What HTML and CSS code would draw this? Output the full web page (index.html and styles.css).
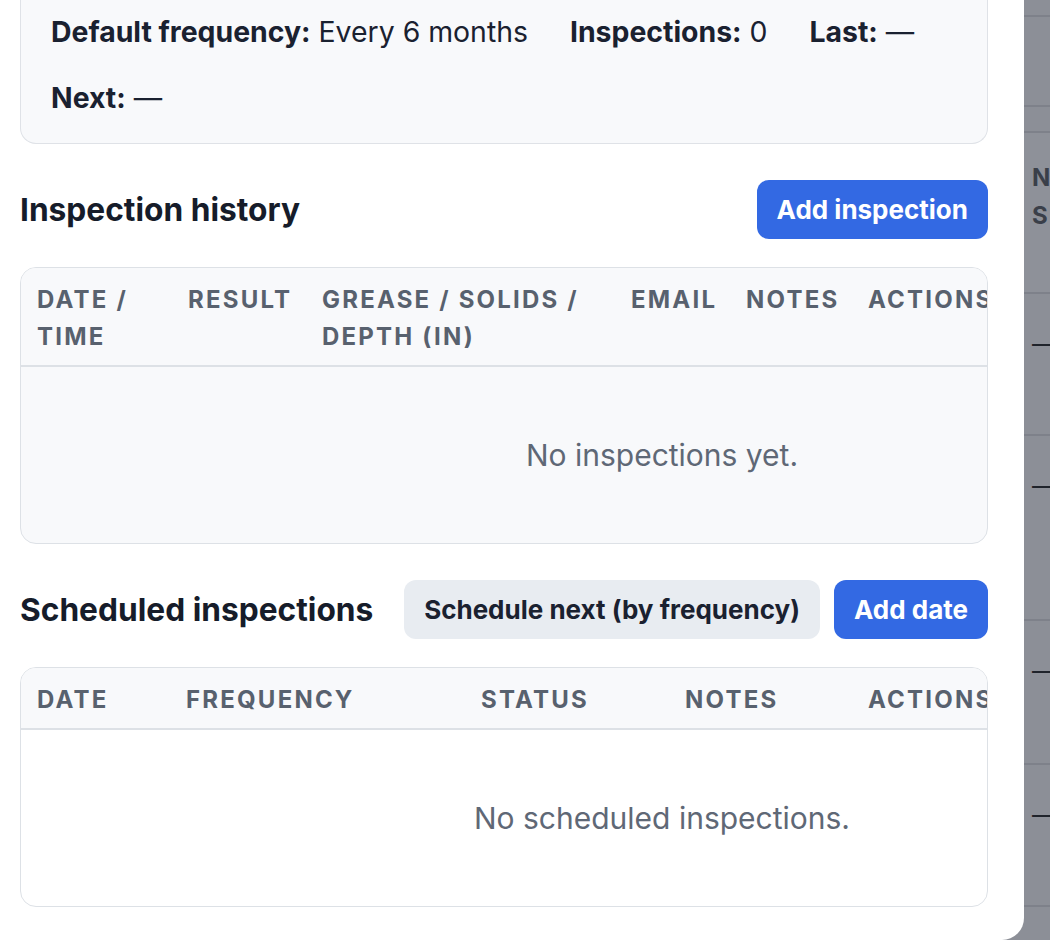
FILE: index.html
```html
<!DOCTYPE html>
<html lang="en">
<head>
<meta charset="utf-8">
<title>Interceptor inspections</title>
<link rel="stylesheet" href="styles.css">
</head>
<body>
<div class="page">
  <div class="page-table">
    <div class="prow r1"><span></span><span></span></div>
    <div class="prow r2"><span></span><span></span></div>
    <div class="prow r3"><span></span><span></span></div>
    <div class="prow phead"><span></span><span class="ph">Next<br>Scheduled</span></div>
    <div class="prow r5"><span></span><span class="dash">—</span></div>
    <div class="prow r6"><span></span><span class="dash">—</span></div>
    <div class="prow r7"><span></span><span class="dash">—</span></div>
    <div class="prow r8"><span></span><span class="dash">—</span></div>
    <div class="prow r9"><span></span><span></span></div>
  </div>
</div>

<aside class="drawer">
  <div class="drawer-body">
    <section class="summary">
      <div class="stat"><b>Default frequency:</b> Every 6 months</div>
      <div class="stat"><b>Inspections:</b> 0</div>
      <div class="stat"><b>Last:</b> —</div>
      <div class="stat"><b>Next:</b> —</div>
    </section>

    <section class="block">
      <div class="block-head">
        <h2>Inspection history</h2>
        <div class="actions">
          <button class="btn btn-primary" type="button">Add inspection</button>
        </div>
      </div>
      <div class="table-wrap tinted">
        <table class="grid">
          <colgroup>
            <col class="c151"><col class="c134"><col class="c309"><col class="c115"><col class="c122"><col>
          </colgroup>
          <thead>
            <tr>
              <th>Date / Time</th>
              <th>Result</th>
              <th>Grease / Solids / Depth (in)</th>
              <th>Email</th>
              <th>Notes</th>
              <th>Actions</th>
            </tr>
          </thead>
          <tbody>
            <tr><td colspan="6" class="empty">No inspections yet.</td></tr>
          </tbody>
        </table>
      </div>
    </section>

    <section class="block">
      <div class="block-head">
        <h2>Scheduled inspections</h2>
        <div class="actions">
          <button class="btn btn-soft" type="button">Schedule next (by frequency)</button>
          <button class="btn btn-primary" type="button">Add date</button>
        </div>
      </div>
      <div class="table-wrap">
        <table class="grid">
          <colgroup>
            <col class="c149"><col class="c295"><col class="c204"><col class="c183"><col>
          </colgroup>
          <thead>
            <tr>
              <th>Date</th>
              <th>Frequency</th>
              <th>Status</th>
              <th>Notes</th>
              <th>Actions</th>
            </tr>
          </thead>
          <tbody>
            <tr><td colspan="5" class="empty">No scheduled inspections.</td></tr>
          </tbody>
        </table>
      </div>
    </section>
  </div>
</aside>
</body>
</html>
```

FILE: styles.css
```css
* { box-sizing: border-box; }

html, body {
  margin: 0;
  height: 100%;
}

body {
  background: #8c8f97;
  font-family: Inter, "Noto Sans", "Liberation Sans", sans-serif;
  color: #111827;
  overflow: hidden;
}

/* ---------- page behind the drawer ---------- */
.page {
  height: 940px;
  overflow: hidden;
}

.prow {
  display: grid;
  grid-template-columns: 1024px 1fr;
  border-bottom: 2px solid #7e818a;
}
.prow span:last-child {
  padding-left: 8px;
  white-space: nowrap;
}
.r1 { height: 17px; }
.r2 { height: 90px; }
.r3 { height: 26px; }
.phead { height: 161px; background: #8e9199; }
.r5 { height: 142px; }
.r6 { height: 185px; }
.r7 { height: 144px; }
.r8 { height: 142px; }
.r9 { height: 40px; border-bottom: 0; }

.ph {
  padding-top: 26px;
  font-size: 24px;
  font-weight: 700;
  line-height: 38px;
  letter-spacing: 2px;
  text-transform: uppercase;
  color: #3a3f49;
}
.dash {
  padding-top: 32px;
  font-size: 26px;
  line-height: 36px;
  color: #1f232b;
}

/* ---------- drawer ---------- */
.drawer {
  position: fixed;
  left: 0;
  top: 0;
  width: 1024px;
  height: 940px;
  background: #ffffff;
  border-bottom-right-radius: 22px;
  overflow: hidden;
}

.drawer-body {
  padding: 0 36px 0 20px;
  display: flex;
  flex-direction: column;
}

.summary {
  display: flex;
  flex-wrap: wrap;
  column-gap: 42px;
  row-gap: 28px;
  padding: 13px 30px 26px 30px;
  background: #f8f9fb;
  border: 1px solid #dfe2e7;
  border-top: 0;
  border-radius: 0 0 16px 16px;
  font-size: 28.4px;
  line-height: 38px;
  color: #1a2130;
}
.stat b { font-weight: 700; }

.block { margin-top: 36px; }

.block-head {
  display: flex;
  align-items: center;
  justify-content: space-between;
  margin-bottom: 28px;
}

.block-head h2 {
  margin: 0;
  font-size: 31.7px;
  line-height: 40px;
  font-weight: 700;
  color: #161c2a;
}

.actions {
  display: flex;
  gap: 14px;
}

.btn {
  font-family: inherit;
  font-size: 26px;
  font-weight: 700;
  line-height: 35px;
  padding: 12px 20px;
  border: 0;
  border-radius: 12px;
  cursor: pointer;
}
.btn-primary {
  background: #3369e3;
  color: #ffffff;
}
.btn-soft {
  background: #e8ecf1;
  color: #1a2130;
}

/* ---------- tables ---------- */
.table-wrap {
  border: 1px solid #dde1e6;
  border-radius: 16px;
  overflow: hidden;
  background: #ffffff;
}
.table-wrap.tinted { background: #f8f9fb; }

.grid {
  width: 1282px;
  table-layout: fixed;
  border-collapse: collapse;
}
.c151 { width: 151px; }
.c134 { width: 134px; }
.c309 { width: 309px; }
.c115 { width: 115px; }
.c122 { width: 122px; }
.c149 { width: 149px; }
.c295 { width: 295px; }
.c204 { width: 204px; }
.c183 { width: 183px; }

.grid th {
  text-align: left;
  vertical-align: top;
  padding: 13px 16px 10px 16px;
  font-size: 24px;
  line-height: 37px;
  font-weight: 700;
  letter-spacing: 2.2px;
  text-transform: uppercase;
  color: #58616e;
  background: #f8f9fb;
  border-bottom: 2px solid #dde1e6;
}

.grid td.empty {
  text-align: center;
  padding: 70px 16px;
  font-size: 30px;
  line-height: 36px;
  color: #5f6876;
}
```
